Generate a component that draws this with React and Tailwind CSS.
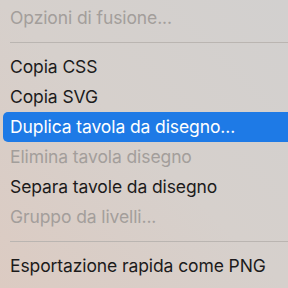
const items = [
  { label: "Opzioni di fusione...", disabled: true },
  { sep: true },
  { label: "Copia CSS" },
  { label: "Copia SVG" },
  { label: "Duplica tavola da disegno...", active: true },
  { label: "Elimina tavola disegno", disabled: true },
  { label: "Separa tavole da disegno" },
  { label: "Gruppo da livelli...", disabled: true },
  { sep: true },
  { label: "Esportazione rapida come PNG" },
  { label: "Esporta come..." },
];

export default function App() {
  return (
    <div
      className="w-[288px] h-[288px] overflow-hidden bg-gradient-to-tr from-[#dccbc2] via-[#d6d0cc] to-[#d2d0cf] pt-[3px] pl-[3px]"
      style={{ fontFamily: "Inter, 'Noto Sans', sans-serif" }}
    >
      {items.map((it, i) =>
        it.sep ? (
          <div key={i} className="ml-[7px] my-[9px] h-px bg-[#bab5b1]" />
        ) : (
          <div
            key={i}
            className={
              "h-[30px] flex items-center pl-[7px] text-[17.5px] tracking-[-0.1px] whitespace-nowrap rounded-l-[5px] " +
              (it.active
                ? "bg-[#1e7ae6] text-white"
                : it.disabled
                ? "text-[#a39e9b]"
                : "text-[#1c1b1b]")
            }
          >
            {it.label}
          </div>
        )
      )}
    </div>
  );
}
